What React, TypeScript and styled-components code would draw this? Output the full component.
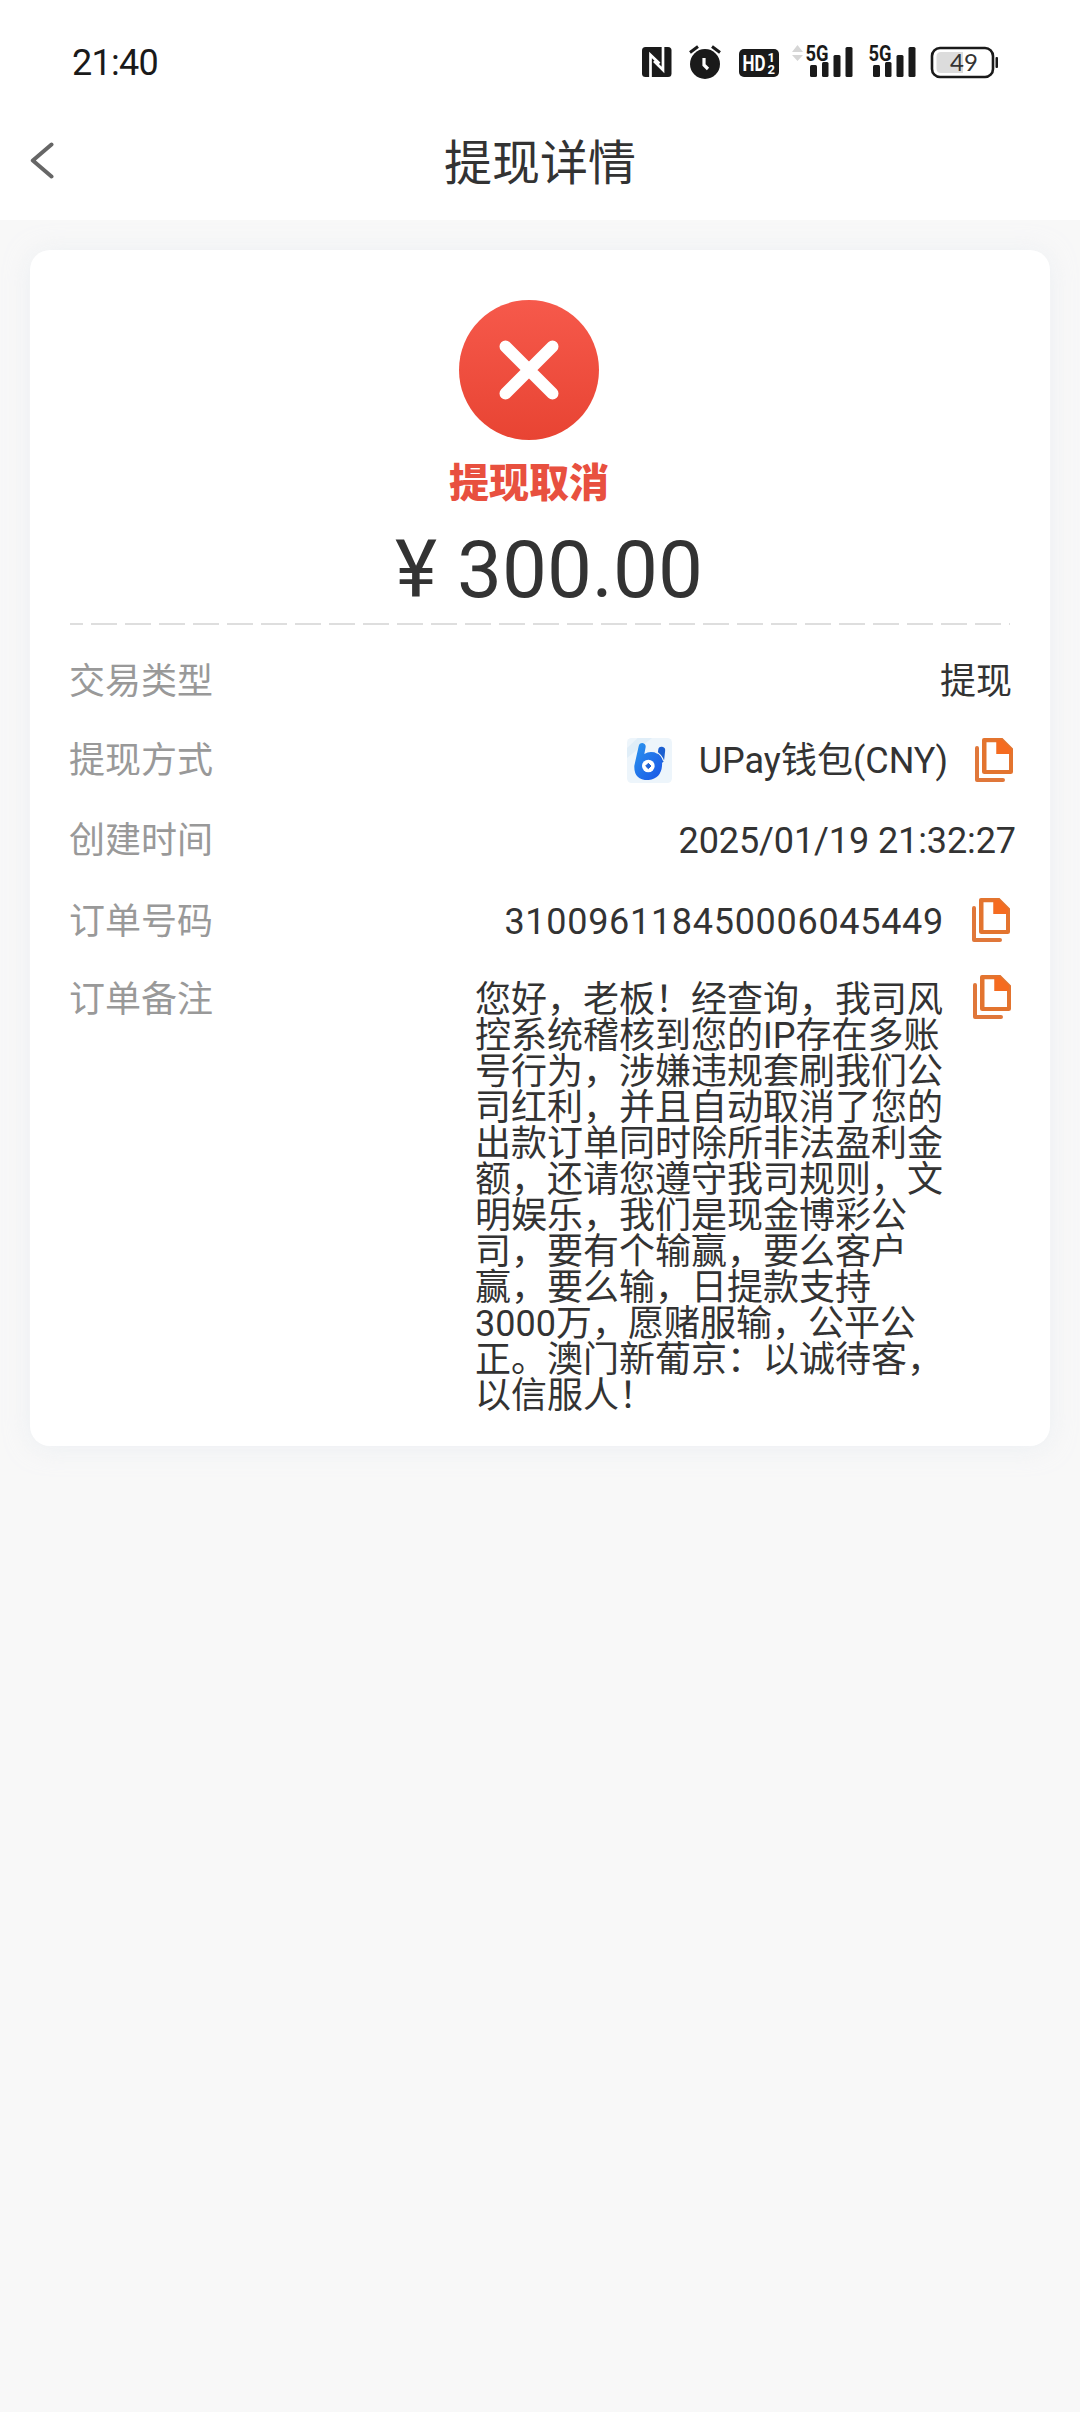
import React from "react";
import styled, { createGlobalStyle } from "styled-components";

const GlobalStyle = createGlobalStyle`
  * { box-sizing: border-box; }
  body {
    margin: 0;
    background: #f8f8f8;
    color: #333;
    font-family: Roboto, "Noto Sans CJK SC", sans-serif;
  }
`;

const Screen = styled.div`
  width: 1080px;
  min-height: 2412px;
  background: #f8f8f8;
`;

const StatusBar = styled.div`
  display: flex;
  align-items: flex-start;
  justify-content: space-between;
  height: 124px;
  padding: 40px 81px 0 72px;
  background: #fff;
`;

const Clock = styled.time`
  margin-top: 2px;
  font-size: 36px;
  line-height: 42px;
  letter-spacing: -0.7px;
  color: #1a1a1a;
`;

const StatusIcons = styled.svg`
  display: block;
  width: 360px;
  height: 40px;
`;

const Header = styled.header`
  display: grid;
  grid-template-columns: 100px 1fr 100px;
  align-items: center;
  height: 96px;
  padding-bottom: 17px;
  background: #fff;
`;

const BackButton = styled.button`
  display: flex;
  height: 79px;
  padding: 17px 0 0 30px;
  border: 0;
  background: none;
`;

const Title = styled.h1`
  margin: 0;
  font-size: 48px;
  font-weight: 400;
  line-height: 79px;
  text-align: center;
`;

const Card = styled.main`
  display: flex;
  flex-direction: column;
  height: 1196px;
  margin: 30px 30px 0;
  padding: 50px 40px 0 39px;
  border-radius: 20px;
  background: #fff;
  box-shadow: 0 2px 24px rgba(225, 232, 238, 0.55);
`;

const Summary = styled.section`
  display: flex;
  flex-direction: column;
  align-items: center;
  height: 323px;
  padding-left: 1px;
`;

const StatusMark = styled.svg`
  display: block;
  width: 140px;
  height: 140px;
  margin-right: 22px;
`;

const StatusText = styled.p`
  margin: 14px 22px 0 0;
  font-size: 40px;
  font-weight: 900;
  line-height: 60px;
  color: #e8503f;
`;

const Amount = styled.p`
  margin: 9px 0 0 18px;
  font-size: 80px;
  line-height: 94px;
  white-space: pre;
`;

const Divider = styled.hr`
  width: 940px;
  height: 2px;
  margin: 0 0 17px 1px;
  border: 0;
  background: repeating-linear-gradient(90deg, #dedede 0 26px, transparent 26px 34px) -13px 0 / 1020px 2px no-repeat;
`;

const Row = styled.div<{ $outset?: number; $height?: number }>`
  display: flex;
  align-items: center;
  justify-content: space-between;
  height: ${(p) => p.$height ?? 80}px;
  margin-right: ${(p) => -(p.$outset ?? 0)}px;
`;

const NoteRow = styled(Row)`
  align-items: flex-start;
  height: auto;
  padding-top: 20px;
`;

const Label = styled.span`
  font-size: 36px;
  line-height: 36px;
  color: #999;
`;

const Value = styled.span<{ $spacing?: number }>`
  display: flex;
  align-items: center;
  font-size: 36px;
  line-height: 36px;
  letter-spacing: ${(p) => p.$spacing ?? 0}px;
`;

const NoteValue = styled.div`
  display: flex;
  align-items: flex-start;
`;

const Note = styled.p`
  width: 498px;
  margin: 0;
  font-size: 36px;
  line-height: 36px;
  white-space: pre;
`;

const WalletLogo = styled.svg`
  display: block;
  width: 45px;
  height: 45px;
  margin: -2px 27px 0 0;
`;

const CopySvg = styled.svg<{ $gap: number; $lift?: number }>`
  display: block;
  flex: none;
  width: 38px;
  height: 44px;
  margin-left: ${(p) => p.$gap}px;
  margin-top: ${(p) => -(p.$lift ?? 2)}px;
`;

const CopyIcon = ({ gap, lift }: { gap: number; lift?: number }) => (
  <CopySvg $gap={gap} $lift={lift} viewBox="0 0 38 44">
    <path d="M2 10V42H28" fill="none" stroke="#e0773a" strokeWidth="4" strokeLinecap="round" strokeLinejoin="round" />
    <path
      fillRule="evenodd"
      fill="#e3742f"
      d="M9 0H27.5L38 10.5V33.5Q38 36 35.5 36H9.5Q7 36 7 33.5V2Q7 0 9 0ZM11.5 4.300V32H34V16H21.500V4.300Z"
    />
    <path d="M21.500 2H27L36 11V16H21.500Z" fill="#f56b20" />
  </CopySvg>
);

const Bars = ({ x }: { x: number }) => (
  <g fill="#1a1a1a">
    <text x={x - 4.5} y="20.500" fontSize="22" fontWeight="700" fontFamily="Roboto" textLength="23" lengthAdjust="spacingAndGlyphs">5G</text>
    <rect x={x} y="25" width="7" height="12" rx="1.500" />
    <rect x={x + 12} y="22" width="6.500" height="15" rx="1.500" />
    <rect x={x + 23.5} y="15" width="7" height="22" rx="1.500" />
    <rect x={x + 35.5} y="7" width="7" height="30" rx="1.500" />
  </g>
);

const rows = [
  "您好，老板！经查询，我司风",
  "控系统稽核到您的IP存在多账",
  "号行为，涉嫌违规套刷我们公",
  "司红利，并且自动取消了您的",
  "出款订单同时除所非法盈利金",
  "额，还请您遵守我司规则，文",
  "明娱乐，我们是现金博彩公",
  "司，要有个输赢，要么客户",
  "赢，要么输，日提款支持",
  "3000万，愿赌服输，公平公",
  "正。澳门新葡京：以诚待客，",
  "以信服人！",
];

export default function App() {
  return (
    <Screen>
      <GlobalStyle />
      <StatusBar>
        <Clock>21:40</Clock>
        <StatusIcons viewBox="0 0 360 40">
          <rect x="3" y="7" width="29.500" height="30" rx="3.500" fill="#1a1a1a" />
          <path d="M11.500 37V15L20.500 23.500M24 7V30L15 21" fill="none" stroke="#fff" strokeWidth="2.700" />
          <circle cx="66" cy="24" r="15" fill="#1a1a1a" />
          <path d="M51 12.500L59 6.500M81 12.500L73 6.500" stroke="#1a1a1a" strokeWidth="3" />
          <path d="M65 18V25L69 29" fill="none" stroke="#fff" strokeWidth="3.200" />
          <rect x="100" y="9" width="40" height="28" rx="5" fill="#1a1a1a" />
          <g fill="#fff" fontFamily="Roboto" fontWeight="700">
            <text x="103.500" y="31" fontSize="22" textLength="23" lengthAdjust="spacingAndGlyphs">HD</text>
            <text x="128.500" y="21.500" fontSize="13">1</text>
            <text x="128.500" y="34" fontSize="13">2</text>
          </g>
          <path d="M153 12L158.500 5L164 12ZM153 15L158.500 21L164 15Z" fill="#d6d6d6" />
          <Bars x={171} />
          <Bars x={234} />
          <rect x="293" y="8" width="61" height="29" rx="8" fill="#fff" stroke="#1a1a1a" strokeWidth="2.600" />
          <path d="M302 12H324V33H302Q297.500 33 297.500 28.500V16.500Q297.500 12 302 12Z" fill="#dcdcdc" />
          <rect x="356.500" y="17" width="2.500" height="11" rx="1" fill="#1a1a1a" />
          <text x="311" y="31" fontSize="24" fontFamily="Lato" fill="#333">49</text>
        </StatusIcons>
      </StatusBar>
      <Header>
        <BackButton aria-label="返回">
          <svg width="26" height="40" viewBox="0 0 26 40">
            <path d="M21.500 3.500L2.800 19.500L21.500 35.500" fill="none" stroke="#666" strokeWidth="4" strokeLinecap="round" strokeLinejoin="round" />
          </svg>
        </BackButton>
        <Title>提现详情</Title>
      </Header>
      <Card>
        <Summary>
          <StatusMark viewBox="0 0 140 140">
            <defs>
              <linearGradient id="mark" x1="0" y1="0" x2="0" y2="1">
                <stop offset="0" stopColor="#f6594b" />
                <stop offset="1" stopColor="#e84433" />
              </linearGradient>
            </defs>
            <circle cx="70" cy="70" r="70" fill="url(#mark)" />
            <path d="M46.500 46.500L93.500 93.500M93.500 46.500L46.500 93.500" stroke="#fff" strokeWidth="12" strokeLinecap="round" />
          </StatusMark>
          <StatusText>提现取消</StatusText>
          <Amount>¥ 300.00</Amount>
        </Summary>
        <Divider />
        <Row $outset={2} $height={79}>
          <Label>交易类型</Label>
          <Value>提现</Value>
        </Row>
        <Row $outset={3}>
          <Label>提现方式</Label>
          <Value>
            <WalletLogo viewBox="0 0 135 135">
              <defs>
                <linearGradient id="wallet" x1="0" y1="0" x2="1" y2="1">
                  <stop offset="0" stopColor="#2b95ee" />
                  <stop offset="1" stopColor="#1a55e6" />
                </linearGradient>
              </defs>
              <rect width="135" height="135" rx="14" fill="#edf5fb" />
              <path d="M0 30L32 0H75L0 60Z" fill="#e0eef8" />
              <path d="M104 37L101 64" stroke="#1b5fd0" strokeWidth="21" strokeLinecap="round" />
              <path d="M35 25Q37 15 46 15Q57 17 56 27L52 48Q65 39 82 43Q108 52 105 84Q102 121 65 126Q20 127 22 83Z" fill="url(#wallet)" />
              <path d="M84 39Q103 49 110 69" fill="none" stroke="#edf5fb" strokeWidth="3.500" />
              <circle cx="64" cy="84" r="19" fill="#fff" />
              <path d="M64 76L72 84L64 92L56 84Z" fill="#2263d4" stroke="#2263d4" strokeWidth="3" strokeLinejoin="round" />
            </WalletLogo>
            UPay钱包(CNY)
            <CopyIcon gap={27} />
          </Value>
        </Row>
        <Row $outset={6}>
          <Label>创建时间</Label>
          <Value $spacing={-0.1}>2025/01/19 21:32:27</Value>
        </Row>
        <Row $height={81}>
          <Label>订单号码</Label>
          <Value>
            <Value $spacing={0.7}>310096118450006045449</Value>
            <CopyIcon gap={28} lift={3} />
          </Value>
        </Row>
        <NoteRow $outset={1}>
          <Label>订单备注</Label>
          <NoteValue>
            <Note>{rows.join("\n")}</Note>
            <CopyIcon gap={0} lift={7} />
          </NoteValue>
        </NoteRow>
      </Card>
    </Screen>
  );
}
